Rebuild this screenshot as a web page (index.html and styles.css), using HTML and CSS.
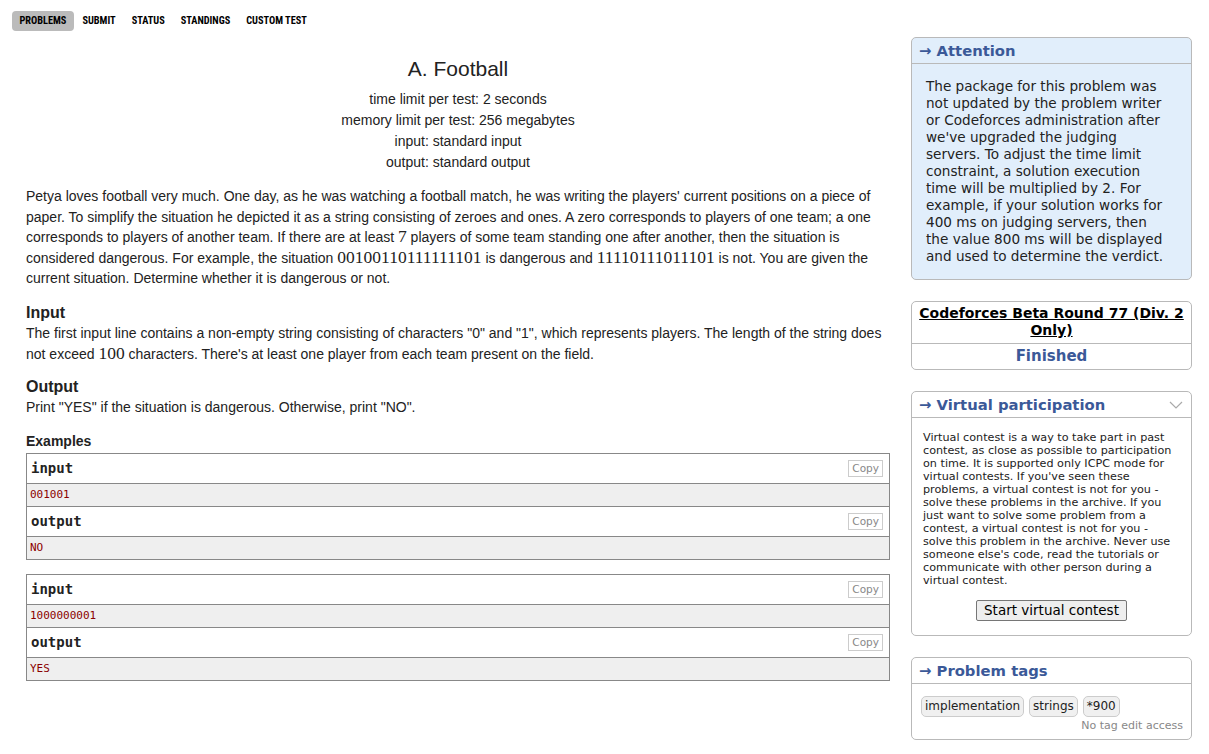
FILE: index.html
```html
<!DOCTYPE html>
<html>
<head>
<meta charset="utf-8">
<link rel="stylesheet" href="styles.css">
</head>
<body>
<div class="menu">
  <a class="menu-item active">PROBLEMS</a>
  <a class="menu-item">SUBMIT</a>
  <a class="menu-item">STATUS</a>
  <a class="menu-item">STANDINGS</a>
  <a class="menu-item">CUSTOM TEST</a>
</div>
<div class="layout">
  <div class="main">
    <div class="header">
      <div class="title">A. Football</div>
      <div class="limit">time limit per test: 2 seconds</div>
      <div class="limit">memory limit per test: 256 megabytes</div>
      <div class="limit">input: standard input</div>
      <div class="limit">output: standard output</div>
    </div>
    <p class="legend">Petya loves football very much. One day, as he was watching a football match, he was writing the players' current positions on a piece of paper. To simplify the situation he depicted it as a string consisting of zeroes and ones. A zero corresponds to players of one team; a one corresponds to players of another team. If there are at least <span class="math">7</span> players of some team standing one after another, then the situation is considered dangerous. For example, the situation <span class="math">00100110111111101</span> is dangerous and <span class="math">11110111011101</span> is not. You are given the current situation. Determine whether it is dangerous or not.</p>
    <div class="section-title">Input</div>
    <p class="spec">The first input line contains a non-empty string consisting of characters "0" and "1", which represents players. The length of the string does not exceed <span class="math">100</span> characters. There's at least one player from each team present on the field.</p>
    <div class="section-title out">Output</div>
    <p class="spec">Print "YES" if the situation is dangerous. Otherwise, print "NO".</p>
    <div class="examples-title">Examples</div>
    <div class="sample">
      <div class="s-head"><span>input</span><span class="copy">Copy</span></div>
      <div class="s-data">001001</div>
      <div class="s-head"><span>output</span><span class="copy">Copy</span></div>
      <div class="s-data">NO</div>
    </div>
    <div class="sample">
      <div class="s-head"><span>input</span><span class="copy">Copy</span></div>
      <div class="s-data">1000000001</div>
      <div class="s-head"><span>output</span><span class="copy">Copy</span></div>
      <div class="s-data">YES</div>
    </div>
  </div>
  <div class="sidebar">
    <div class="box attention">
      <div class="box-title">&rarr; Attention</div>
      <div class="attention-body">The package for this problem was not updated by the problem writer or Codeforces administration after we've upgraded the judging servers. To adjust the time limit constraint, a solution execution time will be multiplied by 2. For example, if your solution works for 400 ms on judging servers, then the value 800 ms will be displayed and used to determine the verdict.</div>
    </div>
    <div class="box contest">
      <div class="contest-name"><a>Codeforces Beta Round 77 (Div. 2 Only)</a></div>
      <div class="contest-state">Finished</div>
    </div>
    <div class="box">
      <div class="box-title vp"><span>&rarr; Virtual participation</span>
        <svg class="chev" width="14" height="8" viewBox="0 0 14 8"><path d="M1 1 L7 7 L13 1" fill="none" stroke="#aaa" stroke-width="1.2"/></svg>
      </div>
      <div class="vp-body">
        <div class="vp-text">Virtual contest is a way to take part in past contest, as close as possible to participation on time. It is supported only ICPC mode for virtual contests. If you've seen these problems, a virtual contest is not for you - solve these problems in the archive. If you just want to solve some problem from a contest, a virtual contest is not for you - solve this problem in the archive. Never use someone else's code, read the tutorials or communicate with other person during a virtual contest.</div>
        <div class="vp-btn-row"><button class="vp-btn">Start virtual contest</button></div>
      </div>
    </div>
    <div class="box">
      <div class="box-title">&rarr; Problem tags</div>
      <div class="tags-body">
        <div class="tags">
          <span class="tag">implementation</span>
          <span class="tag">strings</span>
          <span class="tag">*900</span>
        </div>
        <div class="no-edit">No tag edit access</div>
      </div>
    </div>
  </div>
</div>
</body>
</html>
```
FILE: styles.css
```css
html, body {
  margin: 0;
  padding: 0;
  background: #fff;
}
body {
  font-family: Verdana, "DejaVu Sans", sans-serif;
  color: #222;
}
.menu {
  display: flex;
  align-items: center;
  padding: 11px 0 0 12px;
  height: 20px;
}
.menu-item {
  font-family: "Liberation Sans Narrow", "Roboto Condensed", "Liberation Sans", sans-serif;
  font-weight: bold;
  font-size: 10.3px;
  color: #000;
  padding: 0 7.5px;
  line-height: 20px;
  margin-right: 1px;
  border-radius: 4px;
}
.menu-item.active {
  background: #bbb;
}
.layout {
  display: flex;
  align-items: flex-start;
  padding-top: 6px;
}
.main {
  margin-left: 26px;
  width: 864px;
  font-family: "Liberation Sans", Arial, sans-serif;
  font-size: 14px;
  color: #222;
}
.header {
  text-align: center;
  padding-top: 18px;
}
.title {
  font-size: 21px;
  line-height: 28px;
  margin-bottom: 6px;
}
.limit {
  line-height: 21px;
}
.legend {
  margin: 13px 0 0 0;
  line-height: 20.5px;
}
.math {
  font-family: "Liberation Serif", "Times New Roman", serif;
  font-size: 17.5px;
  line-height: 14px;
}
.section-title {
  font-weight: bold;
  font-size: 16px;
  line-height: 18px;
  margin-top: 15px;
}
.section-title.out {
  margin-top: 13px;
}
.spec {
  margin: 1px 0 0 0;
  line-height: 21px;
}
.examples-title {
  font-weight: bold;
  font-size: 14px;
  margin-top: 15px;
  line-height: 16px;
  margin-bottom: 4px;
}
.sample {
  border: 1px solid #888;
  margin-bottom: 14px;
}
.s-head {
  display: flex;
  justify-content: space-between;
  align-items: center;
  height: 29px;
  padding: 0 6px 0 4px;
  font-family: "DejaVu Sans Mono", Consolas, monospace;
  font-weight: bold;
  font-size: 14px;
  border-bottom: 1px solid #888;
  background: #fff;
}
.copy {
  font-family: "DejaVu Sans", Verdana, sans-serif;
  font-weight: normal;
  font-size: 10.5px;
  color: #888;
  border: 1px solid #ccc;
  padding: 1px 3px;
  line-height: 13px;
}
.s-data {
  height: 22px;
  line-height: 22px;
  padding: 0 3px;
  font-family: "DejaVu Sans Mono", Consolas, monospace;
  font-size: 11px;
  color: #8b0000;
  background: #efefef;
  border-bottom: 1px solid #888;
}
.s-data:last-child {
  border-bottom: none;
}
.sidebar {
  margin-left: 21px;
  width: 281px;
}
.box {
  border: 1px solid #b9b9b9;
  border-radius: 5px;
  margin-bottom: 21px;
  background: #fff;
  overflow: hidden;
}
.box-title {
  font-weight: bold;
  font-size: 14.8px;
  color: #3b5998;
  padding: 0 7px;
  height: 25px;
  line-height: 25px;
  border-bottom: 1px solid #b9b9b9;
}
.box-title.vp {
  display: flex;
  justify-content: space-between;
  align-items: center;
}
.chev {
  margin-right: 1px;
}
.attention {
  background: #e1eefb;
}
.attention-body {
  font-size: 13.6px;
  line-height: 17px;
  padding: 14px 18px 14px 14px;
}
.contest {
  text-align: center;
}
.contest-name {
  padding: 3px 4px 4px;
  border-bottom: 1px solid #b9b9b9;
  font-weight: bold;
  font-size: 14px;
  line-height: 17px;
}
.contest-name a {
  color: #000;
  text-decoration: underline;
}
.contest-state {
  color: #3b5998;
  font-weight: bold;
  font-size: 15px;
  line-height: 25px;
}
.vp-body {
  padding: 13px 17px 14px 11px;
}
.vp-text {
  font-size: 11.2px;
  line-height: 13px;
}
.vp-btn-row {
  text-align: center;
  margin-top: 13px;
  padding-left: 6px;
}
.vp-btn {
  font-family: Verdana, "DejaVu Sans", sans-serif;
  font-size: 13.5px;
  padding: 1px 7px 2px;
  background: #eee;
  border: 1px solid #767676;
  border-radius: 2px;
  color: #000;
}
.tags-body {
  padding: 12px 8px 7px 9px;
}
.tags {
  display: flex;
  gap: 5px;
}
.tag {
  font-size: 12px;
  background: #f0f0f0;
  border: 1px solid #ccc;
  border-radius: 5px;
  padding: 2px 3px 3px;
  line-height: 14px;
}
.no-edit {
  text-align: right;
  font-size: 11px;
  color: #888;
  margin-top: 2px;
}
```
